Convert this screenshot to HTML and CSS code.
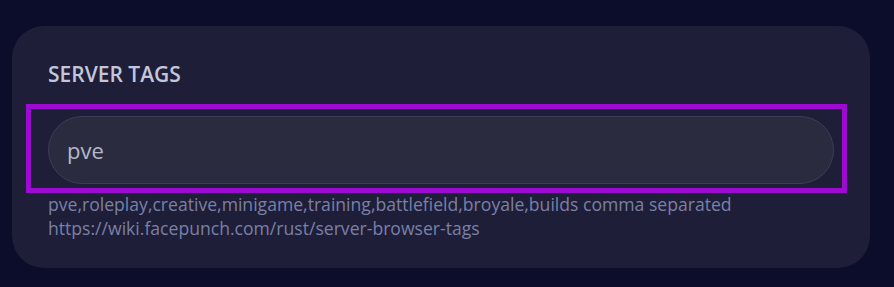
FILE: index.html
```html
<!DOCTYPE html>
<html>
<head>
<meta charset="utf-8">
<link rel="stylesheet" href="styles.css">
</head>
<body>
<section class="card">
  <h2 class="label">SERVER TAGS</h2>
  <div class="field">
    <input class="input" type="text" value="pve">
    <div class="highlight"></div>
  </div>
  <p class="help">pve,roleplay,creative,minigame,training,battlefield,broyale,builds comma separated<br>https://wiki.facepunch.com/rust/server-browser-tags</p>
</section>
</body>
</html>
```
FILE: styles.css
```css
html, body {
  margin: 0;
  padding: 0;
  background: #0c0c2b;
  font-family: "Open Sans", "Noto Sans", sans-serif;
}
.card {
  margin: 26px 24px 0 12px;
  height: 242px;
  box-sizing: border-box;
  background: #1e1e38;
  border-radius: 32px;
  padding: 34px 36px 30px 36px;
}
.label {
  margin: 0;
  font-size: 21px;
  font-weight: 600;
  line-height: 28px;
  color: #c3c6da;
  letter-spacing: 0;
}
.field {
  position: relative;
  margin-top: 28px;
}
.input {
  display: block;
  box-sizing: border-box;
  width: 100%;
  height: 68px;
  border-radius: 34px;
  border: 1px solid #3d3d56;
  background: #2b2b3f;
  color: #b4b8cc;
  font-family: inherit;
  font-size: 22px;
  padding: 0 18px;
  outline: none;
}
.highlight {
  position: absolute;
  left: -22px;
  right: -13px;
  top: -12px;
  bottom: -9px;
  border: 5px solid #9d0bd3;
  pointer-events: none;
}
.help {
  margin: 8px 0 0 0;
  font-size: 17.6px;
  line-height: 24px;
  color: #7b80a6;
}
```
